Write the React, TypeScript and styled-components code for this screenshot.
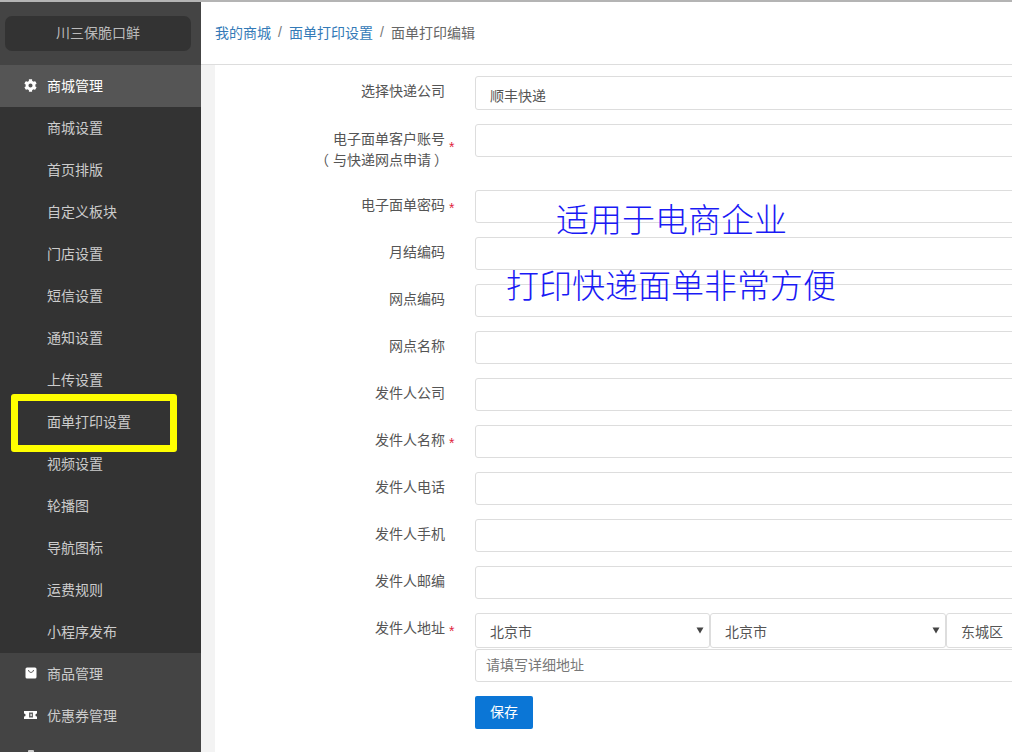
import React from "react";
import styled, { createGlobalStyle } from "styled-components";
import { FaCog } from "react-icons/fa";

const Global = createGlobalStyle`
  html, body { margin: 0; padding: 0; height: 100%; overflow: hidden; background: #fff; }
  body { font-family: "Liberation Sans", "Noto Sans CJK SC", sans-serif; font-size: 14px; color: #555; }
  *, *::before, *::after { box-sizing: border-box; }
`;

const Page = styled.div`
  width: 1012px;
  height: 752px;
  overflow: hidden;
  display: flex;
  flex-direction: column;
  border-top: 2px solid #b4b4b4;
  position: relative;
`;
const Body = styled.div`
  flex: 1;
  display: flex;
  min-height: 0;
`;
const Sidebar = styled.aside`
  width: 201px;
  flex: none;
  background: #444;
  overflow: hidden;
`;
const BrandBar = styled.div`
  height: 63px;
  padding: 14px 10px 0 5px;
`;
const Brand = styled.div`
  height: 35px;
  background: #333;
  border-radius: 7px;
  color: #bbb;
  display: flex;
  align-items: center;
  justify-content: center;
  padding-bottom: 3px;
`;
const GroupItem = styled.div<{ $active?: boolean }>`
  height: 42px;
  display: flex;
  align-items: center;
  padding: 0 0 2px 24px;
  gap: 10px;
  background: ${(p) => (p.$active ? "#555" : "#444")};
  color: ${(p) => (p.$active ? "#fff" : "#ccc")};
`;
const IconSlot = styled.span`
  width: 13px;
  height: 14px;
  flex: none;
  display: flex;
  align-items: center;
  justify-content: center;
  color: #fff;
  font-size: 15px;
`;
const SubList = styled.div`
  background: #333;
`;
const SubItem = styled.div<{ $marked?: boolean }>`
  height: 42px;
  display: flex;
  align-items: center;
  padding: 0 0 2px 47px;
  color: #ccc;
  position: relative;
  ${(p) =>
    p.$marked &&
    `&::after {
      content: "";
      position: absolute;
      left: 11px;
      top: -7px;
      width: 166px;
      height: 58px;
      border: 7px solid #ffff00;
      border-radius: 3px;
    }`}
`;
const Main = styled.main`
  flex: 1;
  min-width: 0;
  display: flex;
  flex-direction: column;
`;
const Crumbs = styled.nav`
  height: 63px;
  flex: none;
  border-bottom: 1px solid #ddd;
  padding: 0 14px 3px;
  display: flex;
  align-items: center;
  color: #666;
`;
const CrumbLink = styled.a`
  color: #337ab7;
`;
const Slash = styled.span`
  color: #777;
  width: 18px;
  text-align: center;
`;
const Content = styled.div`
  flex: 1;
  background: #f3f3f3;
  padding-left: 14px;
  min-height: 0;
`;
const Panel = styled.div`
  background: #fff;
  height: 100%;
  padding-top: 11px;
  overflow: hidden;
  width: 900px;
`;
const Row = styled.div<{ $gap?: number }>`
  display: grid;
  grid-template-columns: 230px 30px 620px;
  margin-bottom: ${(p) => p.$gap ?? 14}px;
`;
const Label = styled.label`
  text-align: right;
  line-height: 21px;
  padding-top: 5px;
  color: #555;
  text-spacing-trim: space-all;
`;
const OpenParen = styled.span`
  margin: 0 4px 0 -4px;
`;
const CloseParen = styled.span`
  margin: 0 -3px 0 3px;
`;
const Star = styled.span<{ $pad?: number }>`
  color: #e0243c;
  font-size: 14px;
  line-height: 21px;
  padding: ${(p) => p.$pad ?? 8}px 0 0 4px;
`;
const Field = styled.div<{ $h?: number; $pl?: number }>`
  height: ${(p) => p.$h ?? 33}px;
  border: 1px solid #ddd;
  border-radius: 3px;
  background: #fff;
  display: flex;
  align-items: center;
  padding-left: ${(p) => p.$pl ?? 14}px;
  color: #555;
`;
const CompanyField = styled(Field)`
  height: 34px;
  padding-top: 3px;
`;
const AddressBox = styled.div`
  display: flex;
  flex-direction: column;
  gap: 1px;
`;
const SelectRow = styled.div`
  display: grid;
  grid-template-columns: 235px 236px 1fr;
`;
const SelectBox = styled(Field)`
  height: 35px;
  position: relative;
`;
const Caret = styled.svg`
  position: absolute;
  right: 5px;
  top: 12px;
  width: 8px;
  height: 8px;
`;
const Placeholder = styled(Field)`
  color: #777;
  padding-bottom: 3px;
`;
const SaveButton = styled.button`
  width: 58px;
  height: 33px;
  border: 0;
  border-radius: 2px;
  background: #0b76d6;
  color: #fff;
  font: inherit;
  padding: 0 0 3px;
`;
const Callout = styled.div<{ $left: number; $top: number }>`
  position: absolute;
  left: ${(p) => p.$left}px;
  top: ${(p) => p.$top}px;
  font-size: 33px;
  line-height: 40px;
  color: #1a1af5;
  font-weight: 300;
  white-space: nowrap;
`;

const BagIcon = () => (
  <svg width="12" height="12" viewBox="0 0 12 12">
    <rect x="0.5" y="0.5" width="11" height="11" rx="1.5" fill="#fff" />
    <path d="M3.5 3 C3.8 6.2 8.2 6.2 8.5 3" fill="none" stroke="#555" strokeWidth="1" />
  </svg>
);
const TicketIcon = () => (
  <svg width="15" height="10" viewBox="0 0 14 10" style={{ flex: "none" }}>
    <path d="M0.5 1h13v2.4a1.6 1.6 0 0 0 0 3.2V9H0.5V6.6a1.6 1.6 0 0 0 0-3.2z" fill="#fff" />
    <rect x="5.5" y="2.5" width="4" height="5" fill="#666" />
    <rect x="7" y="4" width="1.2" height="2" fill="#fff" />
  </svg>
);
const CutIcon = () => (
  <svg width="12" height="14" viewBox="0 0 12 14">
    <rect x="3" y="0" width="6" height="14" rx="1" fill="#ccc" />
  </svg>
);

const subItems = ["商城设置", "首页排版", "自定义板块", "门店设置", "短信设置", "通知设置", "上传设置", "面单打印设置", "视频设置", "轮播图", "导航图标", "运费规则", "小程序发布"];

const rows: { label: string; required?: boolean }[] = [
  { label: "月结编码" },
  { label: "网点编码" },
  { label: "网点名称" },
  { label: "发件人公司" },
  { label: "发件人名称", required: true },
  { label: "发件人电话" },
  { label: "发件人手机" },
  { label: "发件人邮编" },
];

const caret = (
  <Caret viewBox="0 0 8 8">
    <path d="M0.5 1.5h7L4 7.5z" fill="#444" />
  </Caret>
);

export default function App() {
  return (
    <Page>
      <Global />
      <Body>
        <Sidebar>
          <BrandBar>
            <Brand>川三保脆口鲜</Brand>
          </BrandBar>
          <GroupItem $active>
            <IconSlot>
              <FaCog />
            </IconSlot>
            商城管理
          </GroupItem>
          <SubList>
            {subItems.map((s) => (
              <SubItem key={s} $marked={s === "面单打印设置"}>
                {s}
              </SubItem>
            ))}
          </SubList>
          <GroupItem>
            <IconSlot>
              <BagIcon />
            </IconSlot>
            商品管理
          </GroupItem>
          <GroupItem>
            <IconSlot>
              <TicketIcon />
            </IconSlot>
            优惠券管理
          </GroupItem>
          <GroupItem>
            <IconSlot>
              <CutIcon />
            </IconSlot>
          </GroupItem>
        </Sidebar>
        <Main>
          <Crumbs>
            <CrumbLink>我的商城</CrumbLink>
            <Slash>/</Slash>
            <CrumbLink>面单打印设置</CrumbLink>
            <Slash>/</Slash>
            <span>面单打印编辑</span>
          </Crumbs>
          <Content>
            <Panel>
              <Row>
                <Label>选择快递公司</Label>
                <span />
                <CompanyField>顺丰快递</CompanyField>
              </Row>
              <Row $gap={19}>
                <Label>
                  电子面单客户账号
                  <br />
                  <OpenParen>（</OpenParen>与快递网点申请<CloseParen>）</CloseParen>
                </Label>
                <Star $pad={13}>*</Star>
                <Field />
              </Row>
              <Row>
                <Label>电子面单密码</Label>
                <Star>*</Star>
                <Field />
              </Row>
              {rows.map((r) => (
                <Row key={r.label}>
                  <Label>{r.label}</Label>
                  {r.required ? <Star>*</Star> : <span />}
                  <Field />
                </Row>
              ))}
              <Row>
                <Label>发件人地址</Label>
                <Star>*</Star>
                <AddressBox>
                  <SelectRow>
                    <SelectBox>北京市{caret}</SelectBox>
                    <SelectBox>北京市{caret}</SelectBox>
                    <SelectBox>东城区</SelectBox>
                  </SelectRow>
                  <Placeholder $pl={10}>请填写详细地址</Placeholder>
                </AddressBox>
              </Row>
              <Row>
                <span />
                <span />
                <div>
                  <SaveButton>保存</SaveButton>
                </div>
              </Row>
            </Panel>
          </Content>
        </Main>
      </Body>
      <Callout $left={556} $top={199}>适用于电商企业</Callout>
      <Callout $left={506} $top={265}>打印快递面单非常方便</Callout>
    </Page>
  );
}
